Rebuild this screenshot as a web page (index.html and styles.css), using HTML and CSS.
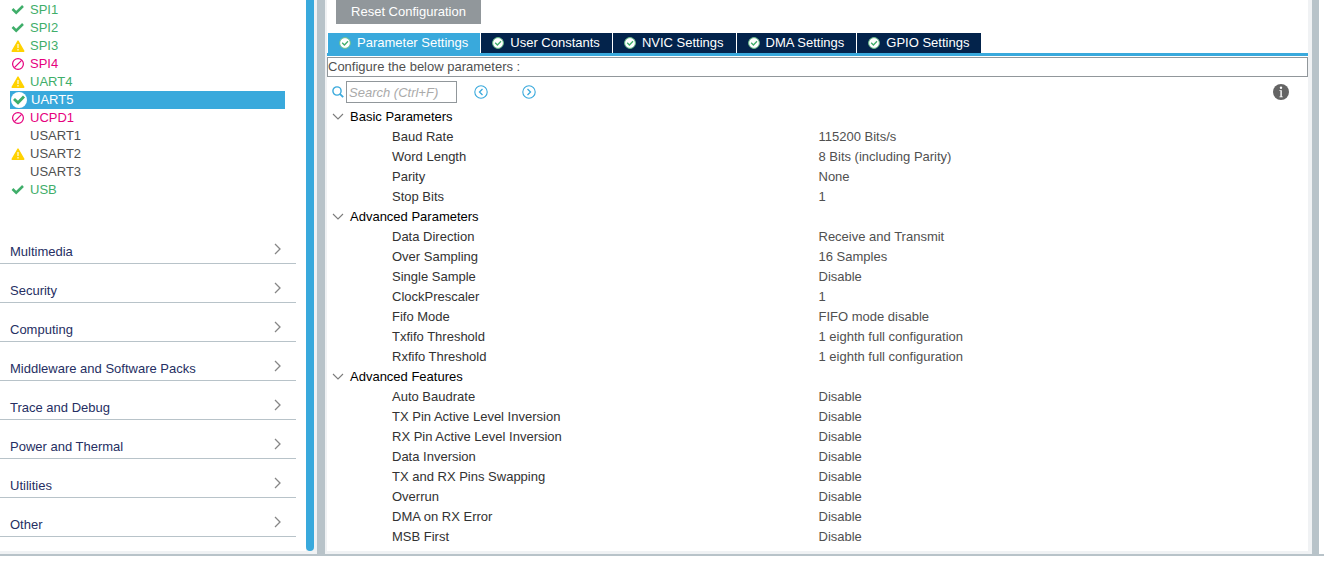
FILE: index.html
```
<!DOCTYPE html>
<html lang="en">
<head>
    <meta charset="UTF-8">
    <meta name="viewport" content="width=device-width, initial-scale=1.0">
    <title>UART5 Mode and Configuration</title>
    <link rel="stylesheet" href="styles.css">
</head>
<body>

    <!-- Shared icons -->
    <svg class="sprite" aria-hidden="true">
        <symbol id="check" viewBox="0 0 14 12">
            <path d="M1.5 5 L5.2 8.6 L12 2" fill="none" stroke="#3fae6a" stroke-width="2.6"/>
        </symbol>
        <symbol id="warning" viewBox="0 0 14 12">
            <path d="M7 1 L12.8 11.2 H1.2 Z" fill="#ffd200" stroke="#ffd200" stroke-width="1.4" stroke-linejoin="round"/>
            <path d="M7 4 V8 M7 9 V10.4" stroke="#fff" stroke-width="1.1"/>
        </symbol>
        <symbol id="blocked" viewBox="0 0 14 14">
            <circle cx="7" cy="7" r="5.4" fill="none" stroke="#e6007e" stroke-width="1.2"/>
            <path d="M3.4 10.6 L10.6 3.4" stroke="#e6007e" stroke-width="1.2"/>
        </symbol>
        <symbol id="selected" viewBox="0 0 16 16">
            <circle cx="8" cy="8" r="8" fill="#fff"/>
            <path d="M3 7 L7 10.8 L13 4.5" fill="none" stroke="#3fae6a" stroke-width="2.8"/>
        </symbol>
        <symbol id="badge" viewBox="0 0 12 12">
            <circle cx="6" cy="6" r="5.4" fill="#fff" stroke="#6cc08b" stroke-width="1"/>
            <path d="M3.2 5.8 L5.4 8 L9 4.2" fill="none" stroke="#3fae6a" stroke-width="1.3"/>
        </symbol>
        <symbol id="right" viewBox="0 0 8 12">
            <path d="M1 1 L6 6 L1 11" fill="none" stroke="#868686" stroke-width="1.3"/>
        </symbol>
        <symbol id="down" viewBox="0 0 12 8">
            <path d="M1 1 L6 6 L11 1" fill="none" stroke="#7c7c7c" stroke-width="1.1"/>
        </symbol>
    </svg>

    <div class="workspace">
        <!-- Peripheral list -->
        <nav class="sidebar">
            <ul class="peripherals">
                <li><a class="peripheral ok" href="#"><svg class="status"><use href="#check"/></svg>SPI1</a></li>
                <li><a class="peripheral ok" href="#"><svg class="status"><use href="#check"/></svg>SPI2</a></li>
                <li><a class="peripheral ok" href="#"><svg class="status"><use href="#warning"/></svg>SPI3</a></li>
                <li><a class="peripheral error" href="#"><svg class="status round"><use href="#blocked"/></svg>SPI4</a></li>
                <li><a class="peripheral ok" href="#"><svg class="status"><use href="#warning"/></svg>UART4</a></li>
                <li><a class="peripheral active" href="#"><svg class="status large"><use href="#selected"/></svg>UART5</a></li>
                <li><a class="peripheral error" href="#"><svg class="status round"><use href="#blocked"/></svg>UCPD1</a></li>
                <li><a class="peripheral" href="#"><span class="status"></span>USART1</a></li>
                <li><a class="peripheral" href="#"><svg class="status"><use href="#warning"/></svg>USART2</a></li>
                <li><a class="peripheral" href="#"><span class="status"></span>USART3</a></li>
                <li><a class="peripheral ok" href="#"><svg class="status"><use href="#check"/></svg>USB</a></li>
            </ul>

            <div class="categories">
                <button class="category">Multimedia <svg class="arrow"><use href="#right"/></svg></button>
                <button class="category">Security <svg class="arrow"><use href="#right"/></svg></button>
                <button class="category">Computing <svg class="arrow"><use href="#right"/></svg></button>
                <button class="category">Middleware and Software Packs <svg class="arrow"><use href="#right"/></svg></button>
                <button class="category">Trace and Debug <svg class="arrow"><use href="#right"/></svg></button>
                <button class="category">Power and Thermal <svg class="arrow"><use href="#right"/></svg></button>
                <button class="category">Utilities <svg class="arrow"><use href="#right"/></svg></button>
                <button class="category">Other <svg class="arrow"><use href="#right"/></svg></button>
            </div>
        </nav>
        <div class="scrollbar">
            <div class="thumb"></div>
        </div>
        <div class="splitter"></div>

        <!-- Configuration panel -->
        <main class="config">
            <button class="reset">Reset Configuration</button>

            <div class="tabs" role="tablist">
                <button class="tab current" role="tab" aria-selected="true"><svg class="badge"><use href="#badge"/></svg>Parameter Settings</button>
                <button class="tab" role="tab"><svg class="badge"><use href="#badge"/></svg>User Constants</button>
                <button class="tab" role="tab"><svg class="badge"><use href="#badge"/></svg>NVIC Settings</button>
                <button class="tab" role="tab"><svg class="badge"><use href="#badge"/></svg>DMA Settings</button>
                <button class="tab" role="tab"><svg class="badge"><use href="#badge"/></svg>GPIO Settings</button>
            </div>

            <div class="panel">
                <p class="hint">Configure the below parameters :</p>

                <div class="toolbar">
                    <label class="search-label" for="search" aria-label="Search">
                        <svg class="search-icon" viewBox="0 0 12 12">
                            <circle cx="5" cy="5" r="4.1" fill="none" stroke="#39a9dc" stroke-width="1.4"/>
                            <path d="M7.8 7.8 L11.2 11.2" stroke="#39a9dc" stroke-width="1.8"/>
                        </svg>
                    </label>
                    <input class="search" id="search" type="text" placeholder="Search (Ctrl+F)">
                    <button class="step" aria-label="Previous">
                        <svg class="step-icon" viewBox="0 0 14 14">
                            <circle cx="7" cy="7" r="6.2" fill="none" stroke="#39a9dc" stroke-width="1.1"/>
                            <path d="M8.5 4 L5.5 7 L8.5 10" fill="none" stroke="#39a9dc" stroke-width="1.3"/>
                        </svg>
                    </button>
                    <button class="step" aria-label="Next">
                        <svg class="step-icon" viewBox="0 0 14 14">
                            <circle cx="7" cy="7" r="6.2" fill="none" stroke="#39a9dc" stroke-width="1.1"/>
                            <path d="M5.5 4 L8.5 7 L5.5 10" fill="none" stroke="#39a9dc" stroke-width="1.3"/>
                        </svg>
                    </button>
                    <button class="info" aria-label="Information">
                        <svg class="info-icon" viewBox="0 0 16 16">
                            <circle cx="8" cy="8" r="8" fill="#646464"/>
                            <circle cx="8" cy="3.8" r="1.2" fill="#fff"/>
                            <path d="M6.4 6.2 H8.8 V12.6 H9.8 V13.3 H6.4 V12.6 H7.4 V6.9 H6.4 Z" fill="#fff"/>
                        </svg>
                    </button>
                </div>

                <table class="parameters">
                    <tbody>
                        <tr><th class="group" colspan="2"><svg class="toggle"><use href="#down"/></svg>Basic Parameters</th></tr>
                        <tr><td class="name">Baud Rate</td><td>115200 Bits/s</td></tr>
                        <tr><td class="name">Word Length</td><td>8 Bits (including Parity)</td></tr>
                        <tr><td class="name">Parity</td><td>None</td></tr>
                        <tr><td class="name">Stop Bits</td><td>1</td></tr>
                    </tbody>
                    <tbody>
                        <tr><th class="group" colspan="2"><svg class="toggle"><use href="#down"/></svg>Advanced Parameters</th></tr>
                        <tr><td class="name">Data Direction</td><td>Receive and Transmit</td></tr>
                        <tr><td class="name">Over Sampling</td><td>16 Samples</td></tr>
                        <tr><td class="name">Single Sample</td><td>Disable</td></tr>
                        <tr><td class="name">ClockPrescaler</td><td>1</td></tr>
                        <tr><td class="name">Fifo Mode</td><td>FIFO mode disable</td></tr>
                        <tr><td class="name">Txfifo Threshold</td><td>1 eighth full configuration</td></tr>
                        <tr><td class="name">Rxfifo Threshold</td><td>1 eighth full configuration</td></tr>
                    </tbody>
                    <tbody>
                        <tr><th class="group" colspan="2"><svg class="toggle"><use href="#down"/></svg>Advanced Features</th></tr>
                        <tr><td class="name">Auto Baudrate</td><td>Disable</td></tr>
                        <tr><td class="name">TX Pin Active Level Inversion</td><td>Disable</td></tr>
                        <tr><td class="name">RX Pin Active Level Inversion</td><td>Disable</td></tr>
                        <tr><td class="name">Data Inversion</td><td>Disable</td></tr>
                        <tr><td class="name">TX and RX Pins Swapping</td><td>Disable</td></tr>
                        <tr><td class="name">Overrun</td><td>Disable</td></tr>
                        <tr><td class="name">DMA on RX Error</td><td>Disable</td></tr>
                        <tr><td class="name">MSB First</td><td>Disable</td></tr>
                    </tbody>
                </table>
            </div>
        </main>
        <div class="edge"></div>
    </div>

</body>
</html>
```
FILE: styles.css
```
/* General Styles */
* {
    box-sizing: border-box;
}

body {
    margin: 0;
    background-color: #fff;
    color: #505050;
    font-family: "Liberation Sans", Arial, sans-serif;
    font-size: 13px;
    line-height: 18px;
}

button,
input {
    font: inherit;
    border: none;
    border-radius: 0;
    padding: 0;
    background: none;
}

button {
    cursor: pointer;
}

svg {
    flex: none;
}

.sprite {
    display: none;
}

.workspace {
    display: flex;
    padding-right: 5px;
    border-bottom: 2px solid #b8c3c9;
}

/* Sidebar */
.sidebar {
    flex: none;
    width: 306px;
    border-bottom: 3px solid #f0f2f4;
}

.peripherals {
    list-style: none;
    margin: 0;
    padding: 1px 21px 26px 10px;
}

.peripheral {
    display: flex;
    align-items: center;
    gap: 5px;
    height: 18px;
    color: #505050;
    line-height: 20px;
    text-decoration: none;
}

.peripheral.ok {
    color: #3fae6a;
}

.peripheral.error {
    color: #e6007e;
}

.peripheral.active {
    background-color: #39a9dc;
    color: #fff;
}

.status {
    width: 14px;
    height: 12px;
    margin-left: 1px;
}

.status.round {
    height: 14px;
}

.status.large {
    width: 16px;
    height: 16px;
    margin-left: 1px;
    margin-right: -1px;
}

.category {
    display: flex;
    justify-content: space-between;
    align-items: center;
    width: 296px;
    height: 39px;
    padding: 16px 14px 0 10px;
    border-bottom: 1px solid #b8c3c9;
    color: #262f63;
}

.arrow {
    width: 8px;
    height: 12px;
    margin-bottom: 6px;
}

.scrollbar {
    flex: none;
    width: 11px;
    padding: 0 3px 3px 0;
    background-color: #f0f2f4;
}

.thumb {
    height: 100%;
    background-color: #39a9dc;
    border-radius: 0 0 4px 4px;
}

.splitter {
    flex: none;
    width: 8px;
    background-color: #b8c3c9;
}

/* Configuration panel */
.config {
    flex: 1;
    border: solid #f0f2f4;
    border-width: 0 4px 3px 2px;
    padding-bottom: 4px;
}

.edge {
    flex: none;
    width: 7px;
    background-color: #b8c3c9;
}

.reset {
    display: block;
    width: 145px;
    height: 24px;
    margin-left: 9px;
    background-color: #91979b;
    color: #fff;
}

.tabs {
    display: flex;
    gap: 1px;
    margin-top: 9px;
    padding-left: 1px;
    border-bottom: 3px solid #39a9dc;
}

.tab {
    display: flex;
    align-items: center;
    gap: 6px;
    height: 20px;
    padding: 0 12px 0 11px;
    background-color: #03234b;
    color: #fff;
}

.tab.current {
    background-color: #39a9dc;
}

.badge {
    width: 12px;
    height: 12px;
}

.panel {
    padding-top: 1px;
}

.hint {
    margin: 0;
    border: 1px solid #91979b;
    line-height: 18px;
}

.toolbar {
    display: flex;
    align-items: center;
    height: 30px;
    padding: 0 19px 0 5px;
}

.search-label {
    display: flex;
    width: 14px;
}

.search-icon {
    width: 12px;
    height: 12px;
}

.search {
    width: 111px;
    height: 22px;
    padding: 0 2px;
    border: 1px solid #91979b;
    color: #505050;
}

.search::placeholder {
    color: #aaa;
    font-style: italic;
}

.step {
    display: flex;
    margin-left: 17px;
}

.step + .step {
    margin-left: 34px;
}

.step-icon {
    width: 14px;
    height: 14px;
}

.info {
    display: flex;
    margin-left: auto;
}

.info-icon {
    width: 16px;
    height: 16px;
}

/* Parameter table */
.parameters {
    width: 100%;
    table-layout: fixed;
    border-collapse: collapse;
}

.parameters td,
.parameters th {
    height: 20px;
    padding: 0 0 0 1px;
    text-align: left;
    font-weight: normal;
}

.parameters .name {
    padding-left: 65px;
    color: #323232;
}

.parameters .group {
    padding-left: 5px;
    color: #000;
}

.toggle {
    width: 12px;
    height: 8px;
    margin-right: 6px;
}
```
